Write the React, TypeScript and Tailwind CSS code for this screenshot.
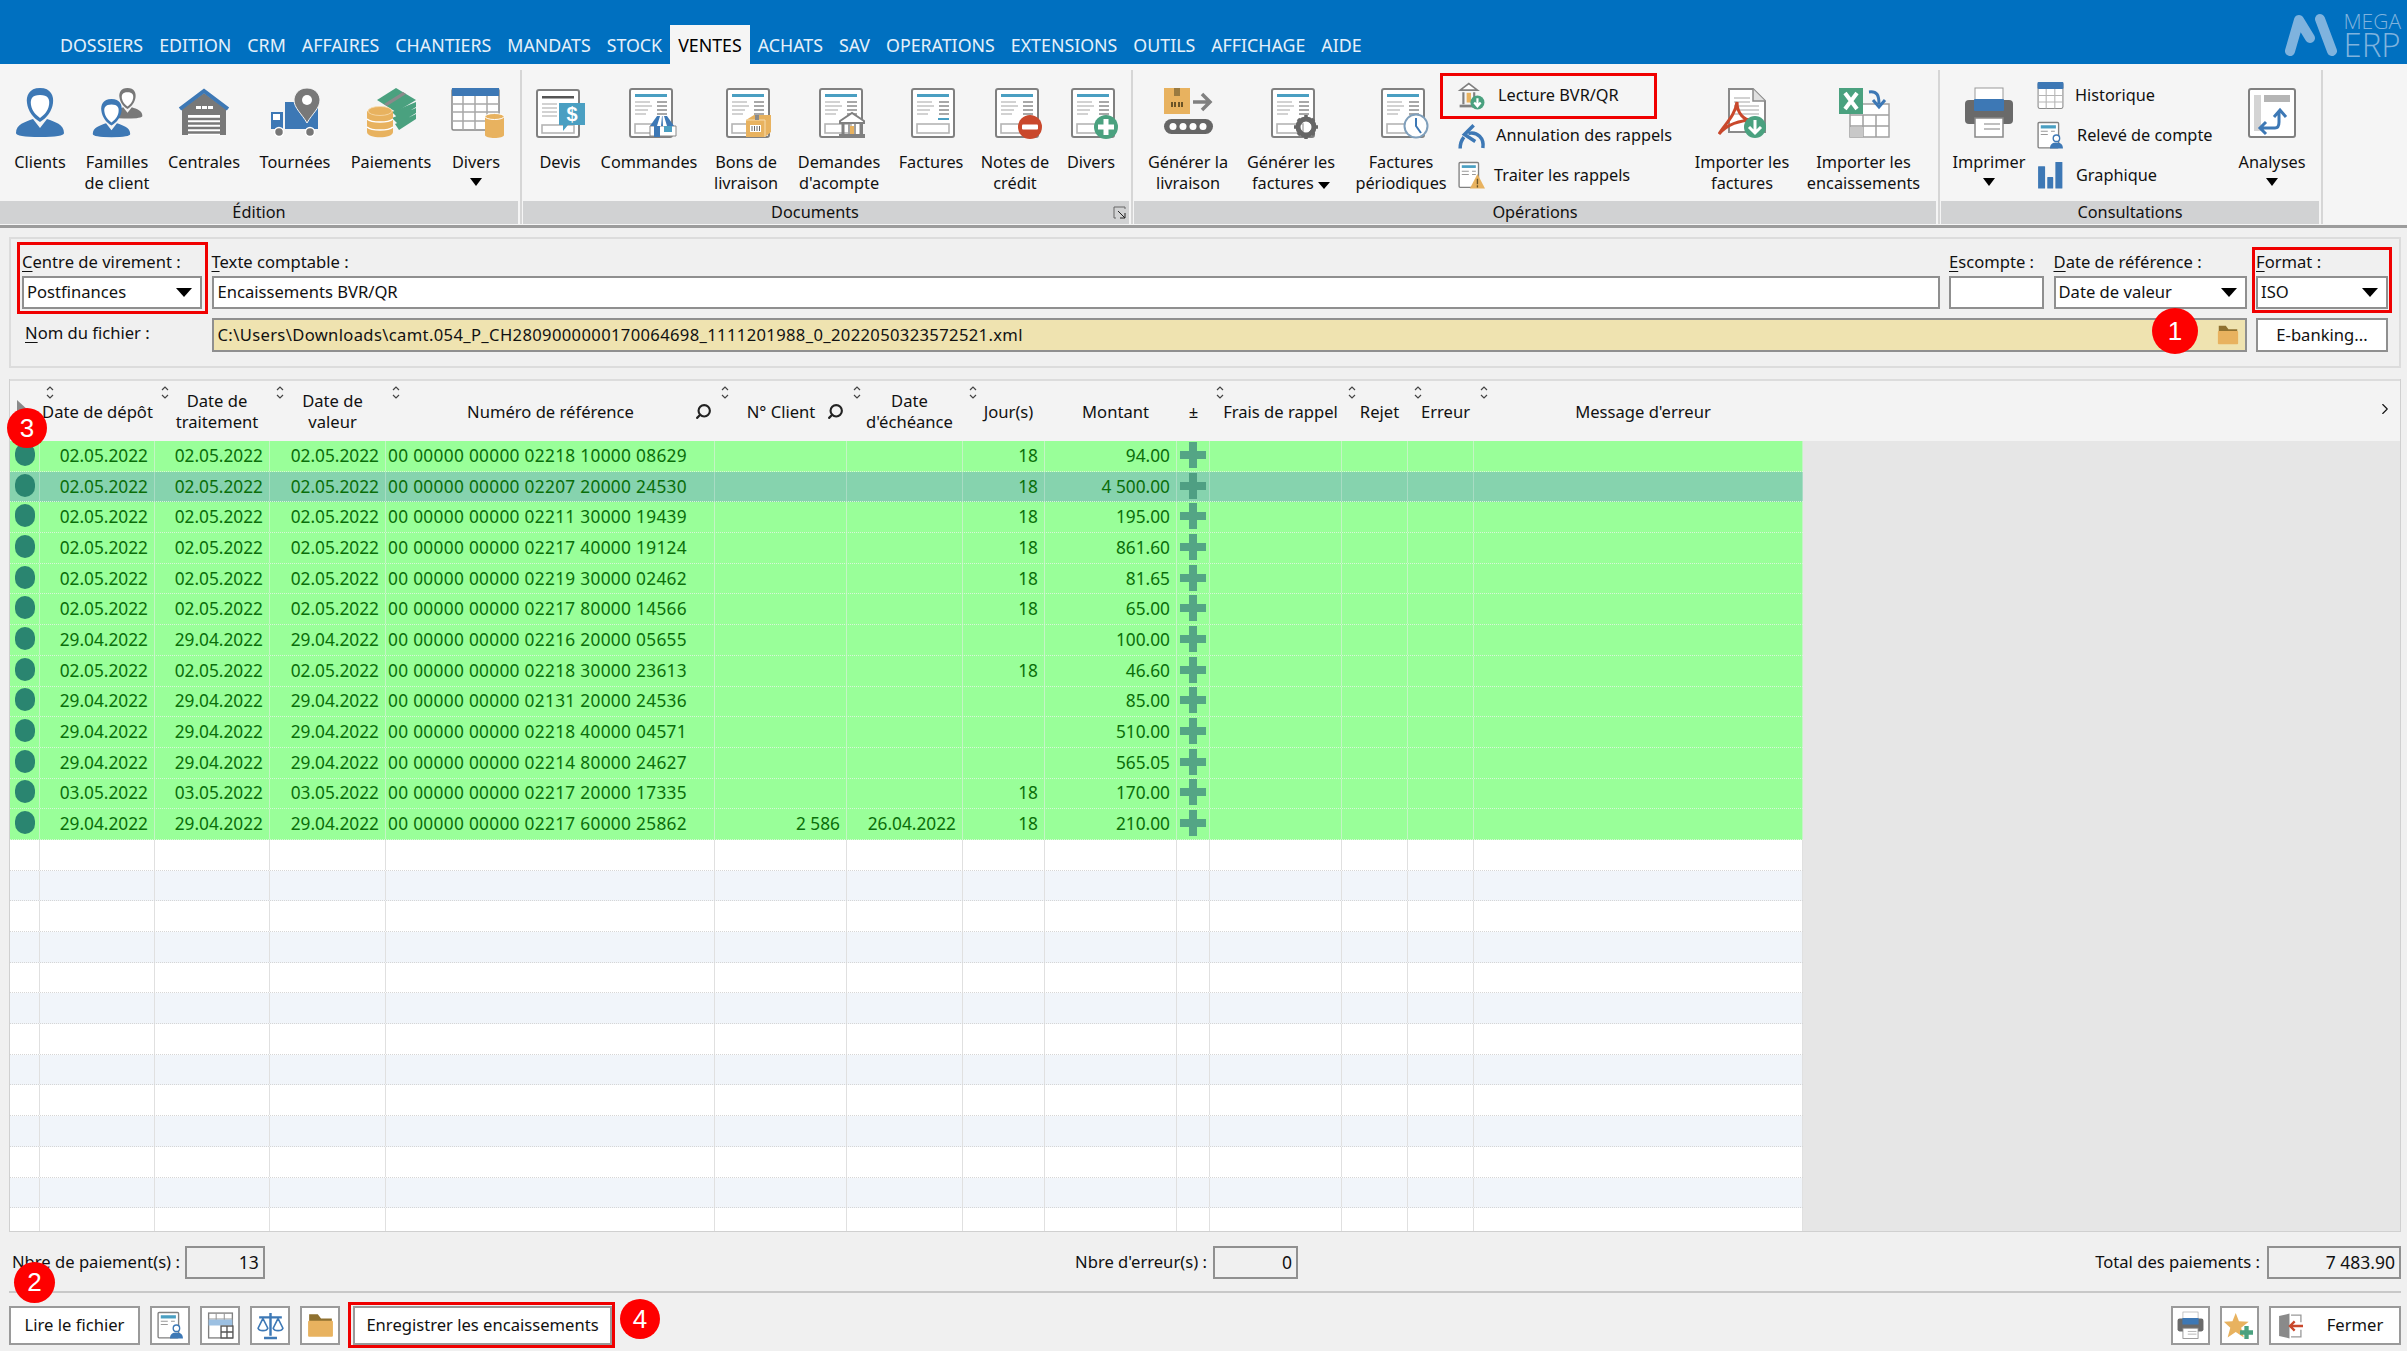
import React from "react";
import { Search, ChevronRight } from "lucide-react";

const BLUE = "#3d78b5";
const GREY = "#787878";
const ORANGE = "#e8b25f";
const GREEN = "#4aa17f";
const TEAL = "#4a9fc2";

// --- icones du ruban ---
function Person({ body = BLUE }: { body?: string }) {
  return (
    <>
      <path d="M1 45C1 36 10 34 18 31L25 40L32 31C40 34 49 36 49 45Q49 49 25 49Q1 49 1 45Z" fill={body} />
      <path d="M25 0C14 0 11 8 12 15C13 23 18 30 25 34C32 30 37 23 38 15C39 8 36 0 25 0Z" fill={body} />
      <path d="M25 7C17 7 15 11 16 17C17 23 21 27 25 30C29 27 33 23 34 17C35 11 33 7 25 7Z" fill="#fff" />
    </>
  );
}

function Doc({ box = true, head = TEAL }: { box?: boolean; head?: string }) {
  return (
    <>
      <rect x="6" y="1" width="42" height="48" rx="2" fill="#fff" stroke="#808080" strokeWidth="2" />
      <rect x="11" y="6" width="32" height="3" fill={head} />
      <path d="M11 14H26M11 18H28M11 22H24M11 26H22" stroke="#c4c4c4" strokeWidth="1.6" />
      <path d="M33 14H43M33 18H43M33 22H43M33 26H43" stroke="#8c8c8c" strokeWidth="1.6" />
      {box && <rect x="11" y="36" width="26" height="9" fill="#fff" stroke="#b5b5b5" strokeWidth="1.6" />}
    </>
  );
}

function Icon({ children, size = 50 }: { children: React.ReactNode; size?: number }) {
  return (
    <svg width={size} height={size} viewBox="0 0 50 50" className="block shrink-0 overflow-visible">
      {children}
    </svg>
  );
}

const icons: Record<string, React.ReactNode> = {
  clients: <Person />,
  familles: (
    <>
      <g transform="translate(20 0) scale(.62)"><Person body={GREY} /></g>
      <g transform="translate(0 11) scale(.78)"><Person /></g>
    </>
  ),
  centrales: (
    <>
      <path d="M3 21L25 5L47 21V47H3Z" fill={GREY} />
      <path d="M1 21L25 3L49 21" fill="none" stroke={BLUE} strokeWidth="4" />
      <path d="M17 18h5v3h-5zM23 18h5v3h-5zM29 18h5v3h-5z" fill="#fff" />
      <path d="M9 27H41V47H9Z" fill="#fff" />
      <path d="M9 31H41M9 35.500H41M9 40H41M9 44.500H41" stroke={GREY} strokeWidth="2.600" />
    </>
  ),
  tournees: (
    <>
      <path d="M15 14H48V41H15Z" fill={BLUE} />
      <path d="M1 24H13V41H1Z" fill={BLUE} />
      <path d="M3 26H10V32H3Z" fill="#fff" />
      <circle cx="9" cy="44" r="4.500" fill="#777" stroke="#fff" strokeWidth="1.500" />
      <circle cx="40" cy="44" r="4.500" fill="#777" stroke="#fff" strokeWidth="1.500" />
      <path d="M37 0C28 0 24 7 24 12C24 20 32 26 37 35C42 26 50 20 50 12C50 7 46 0 37 0Z" fill={GREY} stroke="#f5f5f5" strokeWidth="1" />
      <circle cx="37" cy="12" r="5" fill="#fff" />
    </>
  ),
  paiements: (
    <>
      <path d="M11 12L30 0L50 12L30 24Z" fill={GREEN} />
      <path d="M18 16L37 4L40 6L21 18Z" fill="#8a8a8a" />
      <path d="M26 24L50 14V19L32 30ZM26 30L50 20V25L32 36ZM29 36L50 26V31L33 42Z" fill={GREEN} />
      <path d="M1 24C1 20 27 20 27 24V44C27 51 1 51 1 44Z" fill={ORANGE} />
      <ellipse cx="14" cy="23" rx="12" ry="4.500" fill={ORANGE} stroke="#f7dcae" strokeWidth=".8" />
      <path d="M1 31C6 35 22 35 27 31M1 39C6 43 22 43 27 39" fill="none" stroke="#fff" strokeWidth="1.500" />
    </>
  ),
  tableau: (
    <>
      <rect x="1" y="1" width="47" height="41" rx="1.500" fill="#fff" stroke="#868686" strokeWidth="1.500" />
      <rect x="1" y="0" width="47" height="8" fill={BLUE} />
      <path d="M12 8V42M24 8V42M36 8V42M1 16H48M1 24H48M1 33H48" stroke="#a8a8a8" strokeWidth="1.500" />
      <path d="M34 29C34 25 53 25 53 29V47C53 51 34 51 34 47Z" fill={ORANGE} />
      <ellipse cx="43.500" cy="28.500" rx="9.500" ry="3" fill={ORANGE} stroke="#fff" strokeWidth="1" />
    </>
  ),
  devis: (
    <>
      <rect x="2" y="2" width="42" height="47" rx="2" fill="#fff" stroke="#808080" strokeWidth="2" />
      <rect x="7" y="8" width="32" height="2.500" fill="#555" />
      <path d="M7 16H22M7 20H22M7 24H22M7 28H22" stroke="#c4c4c4" strokeWidth="1.600" />
      <rect x="7" y="37" width="32" height="8" fill="#fff" stroke="#b5b5b5" strokeWidth="1.600" />
      <path d="M24 15H50V37H33L28 43V37H24Z" fill={TEAL} />
      <text x="37" y="33" textAnchor="middle" fontSize="20" fontWeight="700" fill="#fff" fontFamily="Liberation Sans">$</text>
    </>
  ),
  commandes: (
    <>
      <Doc />
      <path d="M26 48V38H52V48Z" fill="#fff" stroke="#888" />
      <path d="M30 38H36V49H30Z" fill={BLUE} />
      <path d="M40 38H48V44H40Z" fill={TEAL} />
      <path d="M33 28H43L50 38H26Z" fill={BLUE} />
      <path d="M36 28L33 38H37L38 28ZM40 28L43 38H39L38.500 28Z" fill="#fff" />
    </>
  ),
  bons: (
    <>
      <Doc />
      <path d="M25 32L33 27H50V44L44 49H25Z" fill={ORANGE} />
      <path d="M25 32H44V49" fill="none" stroke="#f7dcae" strokeWidth="1" />
      <path d="M34 32V27H38V32" fill="#8a8a8a" />
      <path d="M29 37H40V44H29Z" fill="#fff" />
      <path d="M31 38V43M33.500 38V43M36 38V43M38.500 38V43" stroke="#666" />
    </>
  ),
  demandes: (
    <>
      <Doc />
      <path d="M26 33L38 25L50 33V35H26Z" fill="#fff" stroke="#808080" strokeWidth="2" />
      <path d="M29 36V46M47 36V46" stroke="#808080" strokeWidth="3" />
      <path d="M35 36V46M41 36V46" stroke="#a0a0a0" strokeWidth="2" />
      <rect x="36" y="38" width="4" height="8" fill={ORANGE} />
      <rect x="25" y="46" width="26" height="4" fill="#808080" />
    </>
  ),
  factures: (
    <>
      <Doc box={false} />
      <path d="M32 31H43" stroke={TEAL} strokeWidth="2" />
      <rect x="11" y="36" width="32" height="9" fill="#fff" stroke="#b5b5b5" strokeWidth="1.600" />
    </>
  ),
  notes: (
    <>
      <Doc />
      <circle cx="40" cy="39" r="12" fill="#c9482c" />
      <rect x="32" y="36.500" width="16" height="5" rx="1" fill="#fff" />
    </>
  ),
  divers2: (
    <>
      <Doc />
      <circle cx="40" cy="39" r="12" fill={GREEN} />
      <path d="M40 31V47M32 39H48" stroke="#fff" strokeWidth="5" />
    </>
  ),
  livraison: (
    <>
      <rect x="1" y="0" width="26" height="26" fill={ORANGE} />
      <rect x="11" y="0" width="6" height="8" fill="#9a7a40" />
      <path d="M9 19V14M12 19V14M16 19V14M19 19V14" stroke="#6b5326" strokeWidth="2" />
      <path d="M30 14H46M39 6L47 14L39 22" fill="none" stroke="#808080" strokeWidth="3.500" />
      <rect x="1" y="31" width="49" height="15" rx="7.500" fill="#666" />
      <circle cx="10" cy="38.500" r="3.500" fill="#fff" />
      <circle cx="20" cy="38.500" r="3.500" fill="#fff" />
      <circle cx="30" cy="38.500" r="3.500" fill="#fff" />
      <circle cx="40" cy="38.500" r="3.500" fill="#fff" />
    </>
  ),
  generer: (
    <>
      <Doc />
      <circle cx="40" cy="39" r="8" fill="none" stroke="#666" strokeWidth="5" />
      <path d="M40 27V33M40 45V51M28 39H34M46 39H52M32 31L36 35M44 43L48 47M48 31L44 35M36 43L32 47" stroke="#666" strokeWidth="3.500" />
    </>
  ),
  periodiques: (
    <>
      <Doc />
      <circle cx="40" cy="38" r="11.500" fill="#fff" stroke="#7f9fbb" strokeWidth="2" />
      <path d="M40 30V38L45 45" fill="none" stroke={BLUE} strokeWidth="2" />
    </>
  ),
  pdf: (
    <>
      <path d="M12 1H36L48 13V44H12Z" fill="#fff" stroke="#8a8a8a" strokeWidth="2" />
      <path d="M36 1V13H48" fill="#e0e0e0" stroke="#8a8a8a" strokeWidth="1.500" />
      <path d="M17 10H33M17 14H33M17 18H42M17 22H42M17 26H42" stroke="#c4c4c4" strokeWidth="1.600" />
      <path d="M2 46C8 36 18 28 20 14C20 24 26 34 38 32C28 32 12 34 2 46Z" fill="none" stroke="#c9482c" strokeWidth="3" />
      <circle cx="38" cy="39" r="11" fill={GREEN} />
      <path d="M38 32V44M32 39L38 45L44 39" fill="none" stroke="#fff" strokeWidth="3" />
    </>
  ),
  excel: (
    <>
      <rect x="11" y="16" width="39" height="33" fill="#fff" stroke="#a0a0a0" strokeWidth="1.500" />
      <path d="M11 27H50M11 38H50M24 27V49M37 27V49" stroke="#a0a0a0" strokeWidth="1.500" />
      <rect x="11" y="39" width="13" height="10" fill="#c8c8c8" />
      <rect x="0" y="0" width="24" height="26" fill={GREEN} />
      <path d="M6 5L18 21M18 5L6 21" stroke="#fff" strokeWidth="4" />
      <path d="M30 4C38 3 40 7 40 16M34 12L40 19L46 12" fill="none" stroke={BLUE} strokeWidth="3" />
    </>
  ),
  print: (
    <>
      <rect x="11" y="0" width="28" height="14" fill="#fff" stroke="#999" />
      <rect x="1" y="12" width="48" height="24" rx="4" fill="#6a6a6a" />
      <rect x="10" y="11" width="30" height="12" rx="1" fill={BLUE} />
      <rect x="11" y="30" width="28" height="19" fill="#fff" stroke="#888" strokeWidth="1.500" />
      <path d="M20 36H36M20 41H36" stroke="#aaa" strokeWidth="1.600" />
    </>
  ),
  analyses: (
    <>
      <rect x="2" y="1" width="46" height="48" rx="2" fill="#fff" stroke="#808080" strokeWidth="2" />
      <rect x="7" y="7" width="7" height="36" fill="#d4d4d4" />
      <rect x="17" y="7" width="26" height="7" fill="#b5b5b5" />
      <path d="M15 40H28C32 40 32 36 32 34V24M27 29L33 22L39 29M19 34L13 40L19 46" fill="none" stroke={BLUE} strokeWidth="3" />
    </>
  ),
  bank: (
    <>
      <path d="M4 15L20 3L36 15Z" fill="#fff" stroke="#808080" strokeWidth="3" />
      <path d="M10 19V41M30 19V41" stroke="#808080" strokeWidth="4" />
      <rect x="16" y="20" width="8" height="18" fill={ORANGE} />
      <rect x="3" y="42" width="34" height="5" fill="#808080" />
      <circle cx="36" cy="38" r="13" fill={GREEN} />
      <path d="M36 30V44M30 38L36 45L42 38" fill="none" stroke="#fff" strokeWidth="4" />
    </>
  ),
  undo: (
    <>
      <path d="M46 48C49 30 36 17 19 21" fill="none" stroke={BLUE} strokeWidth="6.500" />
      <path d="M29 6L12 23L32 36" fill="none" stroke={BLUE} strokeWidth="6.500" />
      <path d="M4 49C4 40 6 34 11 28" fill="none" stroke={BLUE} strokeWidth="6.500" />
    </>
  ),
  warn: (
    <>
      <rect x="2" y="1" width="36" height="46" rx="2" fill="#fff" stroke="#808080" strokeWidth="2.500" />
      <rect x="7" y="6" width="26" height="5" fill={TEAL} />
      <path d="M7 17H20M7 23H20M26 17H33M26 23H33" stroke="#999" strokeWidth="2" />
      <path d="M36 22L50 49H22Z" fill={ORANGE} />
      <path d="M36 31V41M36 43V47" stroke="#6b5326" strokeWidth="2.500" />
    </>
  ),
  histo: (
    <>
      <rect x="2" y="1" width="46" height="48" rx="3" fill="#fff" stroke="#8a8a8a" strokeWidth="2" />
      <rect x="1" y="0" width="48" height="13" rx="2" fill={BLUE} />
      <path d="M17 13V49M33 13V49M2 25H48M2 37H48" stroke="#b5b5b5" strokeWidth="2" />
    </>
  ),
  releve: (
    <>
      <rect x="2" y="1" width="38" height="47" rx="2" fill="#fff" stroke="#808080" strokeWidth="2.500" />
      <rect x="7" y="6" width="28" height="6" fill={TEAL} />
      <path d="M7 17H20M7 23H20M26 17H33" stroke="#999" strokeWidth="2" />
      <circle cx="36" cy="30" r="6" fill="#fff" stroke={BLUE} strokeWidth="2.500" />
      <path d="M24 49C24 40 30 38 36 38C42 38 48 40 48 49Z" fill={BLUE} />
    </>
  ),
  chart: (
    <>
      <rect x="2" y="8" width="13" height="41" rx="1" fill={BLUE} />
      <rect x="19" y="28" width="11" height="21" rx="1" fill={BLUE} />
      <rect x="34" y="0" width="13" height="49" rx="1" fill={BLUE} />
    </>
  ),
  compare: (
    <>
      <rect x="3" y="2" width="44" height="46" fill="#fff" stroke="#808080" strokeWidth="2.500" />
      <path d="M3 13H47M17 2V24M32 2V24" stroke="#999" strokeWidth="2" />
      <rect x="3" y="14" width="44" height="11" fill="#9cc0e2" />
      <rect x="26" y="26" width="22" height="22" fill="#fff" stroke="#555" strokeWidth="2.500" />
      <path d="M37 26V48M26 37H48" stroke="#555" strokeWidth="2.500" />
    </>
  ),
  balance: (
    <>
      <path d="M25 2V44M4 10H46M13 48H37" stroke={BLUE} strokeWidth="4.500" />
      <path d="M11 12L2 30C4 36 18 36 20 30ZM39 12L30 30C32 36 46 36 48 30Z" fill="#fff" stroke={BLUE} strokeWidth="3" />
    </>
  ),
  folder: (
    <>
      <path d="M4 4H20L26 12H46V20H4Z" fill="#8f7130" />
      <rect x="2" y="16" width="46" height="30" rx="2" fill={ORANGE} />
    </>
  ),
  star: (
    <>
      <path d="M18 2L24 17L42 18L28 29L33 47L18 37L3 47L8 29L-4 18L12 17Z" fill={ORANGE} />
      <path d="M38 26V50M26 38H50" stroke={GREEN} strokeWidth="8" />
    </>
  ),
  exit: (
    <>
      <path d="M4 6L24 1V49L4 44Z" fill="#8a8a8a" />
      <path d="M27 4H46V18M46 32V46H27" fill="none" stroke="#999" strokeWidth="2.500" />
      <path d="M50 25H26M34 16L25 25L34 34" fill="none" stroke="#c9482c" strokeWidth="4.500" />
    </>
  ),
};

// --- ruban ---
function RibbonItem({ w, icon, lines, arrow }: { w: string; icon: string; lines: React.ReactNode[]; arrow?: boolean }) {
  return (
    <div className={`${w} shrink-0 flex flex-col items-center pt-[24px] text-[16.300px] leading-[21px] whitespace-nowrap`}>
      <Icon>{icons[icon]}</Icon>
      <div className="mt-[14px]">{lines[0]}</div>
      {lines[1] && <div>{lines[1]}</div>}
      {arrow && <div className="mt-[5px] w-0 h-0 border-x-[6px] border-x-transparent border-t-[8px] border-t-black" />}
    </div>
  );
}

function SmallItem({ icon, label, gap }: { icon: string; label: string; gap: string }) {
  return (
    <div className={`h-[40px] flex items-center whitespace-nowrap text-[16.300px] ${gap}`}>
      <Icon size={27}>{icons[icon]}</Icon>
      <span>{label}</span>
    </div>
  );
}

function Group({ w, label, children, corner }: { w: string; label: string; children: React.ReactNode; corner?: boolean }) {
  return (
    <div className={`${w} shrink-0 flex flex-col`}>
      <div className="h-[137px] flex">{children}</div>
      <div className={`relative h-[23px] bg-[#d1d2d3] flex items-center justify-center text-[16.300px] ${corner ? "pr-[22px]" : ""}`}>
        {label}
        {corner && (
          <svg width="14" height="14" viewBox="0 0 14 14" className="absolute right-[2px] top-[5px]">
            <path d="M12 3V1H1V12H3" fill="none" stroke="#666" />
            <path d="M5 5L12 12M12 7V12H7" fill="none" stroke="#222" />
          </svg>
        )}
      </div>
    </div>
  );
}

function Sep() {
  return (
    <div className="w-[5px] shrink-0 flex justify-center">
      <div className="w-[2px] bg-[#d6d6d6] mt-[6px] h-[154px]" />
    </div>
  );
}

function Key({ c, rest }: { c: string; rest: string }) {
  return (
    <span>
      <span className="underline underline-offset-[3px]">{c}</span>
      {rest}
    </span>
  );
}

function SelectBox({ value }: { value: string }) {
  return (
    <div className="h-[33px] bg-white border-2 border-[#8f8f8f] flex items-center justify-between pl-[3px] pr-[8px]">
      <span>{value}</span>
      <span className="w-0 h-0 border-x-[8px] border-x-transparent border-t-[9px] border-t-black" />
    </div>
  );
}

// --- grille ---
const cols = "grid grid-cols-[30px_115px_115px_116px_329px_132px_116px_82px_132px_33px_132px_66px_66px_329px]";

const rows = [
  ["02.05.2022", "00 00000 00000 02218 10000 08629", "", "", "18", "94.00"],
  ["02.05.2022", "00 00000 00000 02207 20000 24530", "", "", "18", "4 500.00"],
  ["02.05.2022", "00 00000 00000 02211 30000 19439", "", "", "18", "195.00"],
  ["02.05.2022", "00 00000 00000 02217 40000 19124", "", "", "18", "861.60"],
  ["02.05.2022", "00 00000 00000 02219 30000 02462", "", "", "18", "81.65"],
  ["02.05.2022", "00 00000 00000 02217 80000 14566", "", "", "18", "65.00"],
  ["29.04.2022", "00 00000 00000 02216 20000 05655", "", "", "", "100.00"],
  ["02.05.2022", "00 00000 00000 02218 30000 23613", "", "", "18", "46.60"],
  ["29.04.2022", "00 00000 00000 02131 20000 24536", "", "", "", "85.00"],
  ["29.04.2022", "00 00000 00000 02218 40000 04571", "", "", "", "510.00"],
  ["29.04.2022", "00 00000 00000 02214 80000 24627", "", "", "", "565.05"],
  ["03.05.2022", "00 00000 00000 02217 20000 17335", "", "", "18", "170.00"],
  ["29.04.2022", "00 00000 00000 02217 60000 25862", "2 586", "26.04.2022", "18", "210.00"],
];

const headers: { label: React.ReactNode; sort: boolean; search?: boolean; nudge?: boolean }[] = [
  { label: "", sort: false },
  { label: "Date de dépôt", sort: true },
  { label: <>Date de<br />traitement</>, sort: true, nudge: true },
  { label: <>Date de<br />valeur</>, sort: true, nudge: true },
  { label: "Numéro de référence", sort: true, search: true },
  { label: "N° Client", sort: true, search: true },
  { label: <>Date<br />d'échéance</>, sort: true, nudge: true },
  { label: "Jour(s)", sort: true, nudge: true },
  { label: "Montant", sort: false, nudge: true },
  { label: "±", sort: false },
  { label: "Frais de rappel", sort: true, nudge: true },
  { label: "Rejet", sort: true, nudge: true },
  { label: "Erreur", sort: true, nudge: true },
  { label: "Message d'erreur", sort: true, nudge: true },
];

function SortArrows() {
  return (
    <svg width="10" height="15" viewBox="0 0 10 15" className="absolute left-[5px] top-[4px]">
      <path d="M2 5L5 2L8 5M2 10L5 13L8 10" fill="none" stroke="#444" strokeWidth="1.200" />
    </svg>
  );
}

function Cell({ right, left, line, children }: { right?: boolean; left?: boolean; line: string; children?: React.ReactNode }) {
  return (
    <div className={`flex items-center border-r ${line} overflow-hidden whitespace-nowrap ${right ? "justify-end pr-[6px]" : ""} ${left ? "pl-[2px]" : ""}`}>
      {children}
    </div>
  );
}

function DataRow({ row, selected }: { row: string[]; selected: boolean }) {
  const line = selected ? "border-[#a8dcc4]" : "border-[#c4f5c4]";
  return (
    <div className={`${cols} h-[30.700px] shrink-0 border-b border-dotted border-[#d8f5d8] text-[17.300px] text-[#0a6e0a] ${selected ? "bg-[#86d3ae]" : "bg-[#99ff99]"}`}>
      <div className={`flex items-center justify-center border-r ${line}`}>
        <div className="w-[20px] h-[23px] -mt-[3px] rounded-full bg-[#2a8570]" />
      </div>
      <Cell right line={line}>{row[0]}</Cell>
      <Cell right line={line}>{row[0]}</Cell>
      <Cell right line={line}>{row[0]}</Cell>
      <Cell left line={line}><span className="tracking-[0.300px]">{row[1]}</span></Cell>
      <Cell right line={line}>{row[2]}</Cell>
      <Cell right line={line}>{row[3]}</Cell>
      <Cell right line={line}>{row[4]}</Cell>
      <Cell right line={line}>{row[5]}</Cell>
      <div className={`flex items-center justify-center border-r ${line}`}>
        <svg width="26" height="26" viewBox="0 0 26 26" className="-mt-[2px]">
          <path d="M13 0V26M0 13H26" stroke={selected ? "#4f9f83" : "#54a585"} strokeWidth="8" />
        </svg>
      </div>
      <Cell line={line} />
      <Cell line={line} />
      <Cell line={line} />
      <Cell line={line} />
    </div>
  );
}

function EmptyRow({ alt }: { alt: boolean }) {
  return (
    <div className={`${cols} h-[30.700px] shrink-0 border-b border-dotted border-[#d6d6d6] ${alt ? "bg-[#f1f5fa]" : "bg-white"}`}>
      {headers.map((_, i) => (
        <div key={i} className="border-r border-[#e0e0e0]" />
      ))}
    </div>
  );
}

function Btn({ w, children, className = "" }: { w: string; children: React.ReactNode; className?: string }) {
  return (
    <div className={`${w} h-[39px] shrink-0 bg-white border-2 border-[#9a9a9a] flex items-center justify-center ${className}`}>
      {children}
    </div>
  );
}

function ReadOnly({ w, value }: { w: string; value: string }) {
  return (
    <div className={`${w} h-[33px] shrink-0 bg-[#f0f0f0] border-2 border-[#909090] flex items-center justify-end pr-[4px] text-[17.500px]`}>
      {value}
    </div>
  );
}

function Badge({ n, pos }: { n: number; pos: string }) {
  return (
    <div className={`absolute ${pos} rounded-full bg-[#fe0000] text-white flex items-center justify-center font-['Liberation_Sans',sans-serif] text-[26px]`}>
      {n}
    </div>
  );
}

const menu = ["DOSSIERS", "EDITION", "CRM", "AFFAIRES", "CHANTIERS", "MANDATS", "STOCK", "VENTES", "ACHATS", "SAV", "OPERATIONS", "EXTENSIONS", "OUTILS", "AFFICHAGE", "AIDE"];

export default function App() {
  return (
    <div className="relative w-[2407px] h-[1351px] overflow-hidden flex flex-col bg-[#f0f0f0] text-[#111] font-['Noto_Sans','Open_Sans',sans-serif]">
      {/* menu */}
      <div className="h-[64px] shrink-0 bg-[#0070c0] flex items-end pl-[52px] pt-[1px] text-[17.800px]">
        {menu.map((m) =>
          m === "VENTES" ? (
            <div key={m} className="h-[39px] bg-[#f5f5f5] text-black px-[8px] pt-[6px] leading-[28px]">{m}</div>
          ) : (
            <div key={m} className="h-[39px] text-[#e6f0fa] px-[8px] pt-[6px] leading-[28px]">{m}</div>
          ),
        )}
        <div className="flex-1" />
        <div className="flex h-[63px] pr-[6px] text-[#7fb3de]">
          <svg width="52" height="43" viewBox="0 0 52 43" className="mr-[6px] mt-[12px]">
            <path d="M5 38L14 7L25 25M35 6L47 38" fill="none" stroke="#7fb3de" strokeWidth="10" strokeLinecap="round" strokeLinejoin="round" />
          </svg>
          <div className="flex flex-col pt-[11px] font-['Open_Sans',sans-serif] font-light">
            <span className="text-[21px] leading-[18px]">MEGA</span>
            <span className="text-[33px] leading-[30px]">ERP</span>
          </div>
        </div>
      </div>

      {/* ruban */}
      <div className="h-[161px] shrink-0 bg-[#f5f5f5] flex">
        <Group w="w-[518px]" label="Édition">
          <RibbonItem w="w-[80px]" icon="clients" lines={["Clients"]} />
          <RibbonItem w="w-[74px]" icon="familles" lines={["Familles", "de client"]} />
          <RibbonItem w="w-[100px]" icon="centrales" lines={["Centrales"]} />
          <RibbonItem w="w-[82px]" icon="tournees" lines={["Tournées"]} />
          <RibbonItem w="w-[110px]" icon="paiements" lines={["Paiements"]} />
          <RibbonItem w="w-[60px]" icon="tableau" lines={["Divers"]} arrow />
        </Group>
        <Sep />
        <Group w="w-[606px]" label="Documents" corner>
          <RibbonItem w="w-[74px]" icon="devis" lines={["Devis"]} />
          <RibbonItem w="w-[104px]" icon="commandes" lines={["Commandes"]} />
          <RibbonItem w="w-[90px]" icon="bons" lines={["Bons de", "livraison"]} />
          <RibbonItem w="w-[96px]" icon="demandes" lines={["Demandes", "d'acompte"]} />
          <RibbonItem w="w-[88px]" icon="factures" lines={["Factures"]} />
          <RibbonItem w="w-[80px]" icon="notes" lines={["Notes de", "crédit"]} />
          <RibbonItem w="w-[72px]" icon="divers2" lines={["Divers"]} />
        </Group>
        <Sep />
        <Group w="w-[802px]" label="Opérations">
          <RibbonItem w="w-[108px]" icon="livraison" lines={["Générer la", "livraison"]} />
          <RibbonItem w="w-[98px]" icon="generer" lines={["Générer les", <>factures <span className="inline-block w-0 h-0 border-x-[6px] border-x-transparent border-t-[7px] border-t-black" /></>]} />
          <div className="w-[22px] shrink-0" />
          <RibbonItem w="w-[78px]" icon="periodiques" lines={["Factures", "périodiques"]} />
          <div className="w-[245px] shrink-0 pl-[18px] pt-[11px] flex flex-col">
            <SmallItem icon="bank" label="Lecture BVR/QR" gap="gap-[13px]" />
            <SmallItem icon="undo" label="Annulation des rappels" gap="gap-[11px]" />
            <SmallItem icon="warn" label="Traiter les rappels" gap="gap-[9px]" />
          </div>
          <RibbonItem w="w-[114px]" icon="pdf" lines={["Importer les", "factures"]} />
          <RibbonItem w="w-[129px]" icon="excel" lines={["Importer les", "encaissements"]} />
        </Group>
        <Sep />
        <Group w="w-[378px]" label="Consultations">
          <RibbonItem w="w-[96px]" icon="print" lines={["Imprimer"]} arrow />
          <div className="w-[188px] shrink-0 pt-[11px] flex flex-col">
            <SmallItem icon="histo" label="Historique" gap="gap-[11px]" />
            <SmallItem icon="releve" label="Relevé de compte" gap="gap-[13px]" />
            <SmallItem icon="chart" label="Graphique" gap="gap-[12px]" />
          </div>
          <RibbonItem w="w-[94px]" icon="analyses" lines={["Analyses"]} arrow />
        </Group>
        <Sep />
      </div>

      <div className="h-[3px] shrink-0 bg-[#9c9c9c]" />

      {/* formulaire */}
      <div className="mt-[9px] mx-[9px] mr-[6px] h-[131px] shrink-0 bg-[#f0f0f0] border-2 border-[#dcdcdc] pt-[10px] px-[11px] text-[16.600px] flex flex-col">
        <div className="flex gap-[9.500px]">
          <div className="w-[180px] shrink-0">
            <div className="h-[27px] leading-[26px]"><Key c="C" rest="entre de virement :" /></div>
            <SelectBox value="Postfinances" />
          </div>
          <div className="flex-1">
            <div className="h-[27px] leading-[26px]"><Key c="T" rest="exte comptable :" /></div>
            <div className="h-[33px] bg-white border-2 border-[#8f8f8f] flex items-center pl-[4px]">Encaissements BVR/QR</div>
          </div>
          <div className="w-[95px] shrink-0">
            <div className="h-[27px] leading-[26px]"><Key c="E" rest="scompte :" /></div>
            <div className="h-[33px] bg-white border-2 border-[#8f8f8f]" />
          </div>
          <div className="w-[193px] shrink-0">
            <div className="h-[27px] leading-[26px]"><Key c="D" rest="ate de référence :" /></div>
            <SelectBox value="Date de valeur" />
          </div>
          <div className="w-[132px] shrink-0">
            <div className="h-[27px] leading-[26px]"><Key c="F" rest="ormat :" /></div>
            <SelectBox value="ISO" />
          </div>
        </div>
        <div className="flex gap-[9.500px] mt-[9px]">
          <div className="w-[180px] shrink-0 h-[30px] pl-[3px] leading-[30px]"><Key c="N" rest="om du fichier :" /></div>
          <div className="flex-1 h-[34px] bg-[#efe3b0] border-2 border-[#8f8f8f] flex items-center justify-between pl-[4px] pr-[6px]">
            <span className="tracking-[0.350px]">C:\Users\Downloads\camt.054_P_CH2809000000170064698_1111201988_0_2022050323572521.xml</span>
            <Icon size={22}>{icons.folder}</Icon>
          </div>
          <div className="w-[132px] shrink-0 h-[34px] bg-white border-2 border-[#8f8f8f] flex items-center justify-center">E-banking...</div>
        </div>
      </div>

      {/* grille */}
      <div className="mt-[11px] ml-[9px] mr-[6px] h-[853px] shrink-0 border-l border-r border-b border-[#d0d0d0] flex flex-col overflow-hidden">
        <div className="relative h-[62px] shrink-0 bg-[#f3f3f3] border-t-2 border-[#dcdcdc] text-[16.600px] leading-[21px]">
          <div className={`${cols} h-full`}>
            {headers.map((h, i) => (
              <div key={i} className={`relative flex items-center justify-center text-center whitespace-nowrap ${h.nudge ? "pl-[9px]" : ""}`}>
                {h.sort && <SortArrows />}
                {i === 0 && <div className="w-0 h-0 -ml-[4px] border-y-[11px] border-y-transparent border-l-[12px] border-l-[#8a8a8a]" />}
                <span>{h.label}</span>
                {h.search && <Search size={17} strokeWidth={3} className="absolute right-[3px] top-[22px] -scale-x-100 text-[#222]" />}
              </div>
            ))}
          </div>
          <ChevronRight size={18} strokeWidth={1.500} className="absolute right-[6px] top-[19px]" />
        </div>
        <div className="flex-1 flex overflow-hidden">
          <div className="flex flex-col shrink-0">
            {rows.map((r, i) => (
              <DataRow key={i} row={r} selected={i === 1} />
            ))}
            {Array.from({ length: 13 }).map((_, i) => (
              <EmptyRow key={i} alt={i % 2 === 1} />
            ))}
          </div>
          <div className="flex-1 bg-[#e6e6e6]" />
        </div>
      </div>

      {/* bas de page */}
      <div className="mt-[14px] ml-[12px] mr-[6px] flex items-center justify-between text-[16.600px]">
        <div className="flex items-center gap-[5px] w-[1040px]">
          <span className="whitespace-nowrap">Nbre de paiement(s) :</span>
          <ReadOnly w="w-[80px]" value="13" />
        </div>
        <div className="flex items-center gap-[6px]">
          <span className="whitespace-nowrap">Nbre d'erreur(s) :</span>
          <ReadOnly w="w-[85px]" value="0" />
        </div>
        <div className="flex items-center gap-[7px] w-[1080px] justify-end">
          <span className="whitespace-nowrap">Total des paiements :</span>
          <ReadOnly w="w-[134px]" value="7 483.90" />
        </div>
      </div>

      <div className="mt-[12px] mx-[9px] mr-[6px] h-[2px] bg-[#c8c8c8]" />

      <div className="mt-[13px] ml-[9px] mr-[6px] flex items-center justify-between text-[16.600px]">
        <div className="flex items-center gap-[10px]">
          <Btn w="w-[131px]">Lire le fichier</Btn>
          <Btn w="w-[40px]"><Icon size={27}>{icons.releve}</Icon></Btn>
          <Btn w="w-[40px]"><Icon size={27}>{icons.compare}</Icon></Btn>
          <Btn w="w-[40px]"><Icon size={27}>{icons.balance}</Icon></Btn>
          <Btn w="w-[40px]"><Icon size={27}>{icons.folder}</Icon></Btn>
          <Btn w="w-[259px] ml-[3px]">Enregistrer les encaissements</Btn>
        </div>
        <div className="flex items-center gap-[10px]">
          <Btn w="w-[39px]"><Icon size={27}>{icons.print}</Icon></Btn>
          <Btn w="w-[39px]"><Icon size={27}>{icons.star}</Icon></Btn>
          <Btn w="w-[132px]" className="gap-[24px] pr-[10px]"><Icon size={26}>{icons.exit}</Icon>Fermer</Btn>
        </div>
      </div>

      {/* annotations */}
      <div className="absolute left-[1440px] top-[73px] w-[217px] h-[46px] border-[3px] border-[#f00000]" />
      <div className="absolute left-[17px] top-[242px] w-[191px] h-[72px] border-[3px] border-[#f00000]" />
      <div className="absolute left-[2252px] top-[247px] w-[140px] h-[66px] border-[3px] border-[#f00000]" />
      <div className="absolute left-[348px] top-[1302px] w-[267px] h-[46px] border-[3px] border-[#f00000]" />
      <Badge n={1} pos="left-[2152px] top-[308px] w-[46px] h-[46px]" />
      <Badge n={3} pos="left-[7px] top-[408px] w-[40px] h-[40px]" />
      <Badge n={2} pos="left-[14px] top-[1262px] w-[41px] h-[41px]" />
      <Badge n={4} pos="left-[620px] top-[1299px] w-[40px] h-[40px]" />
    </div>
  );
}
